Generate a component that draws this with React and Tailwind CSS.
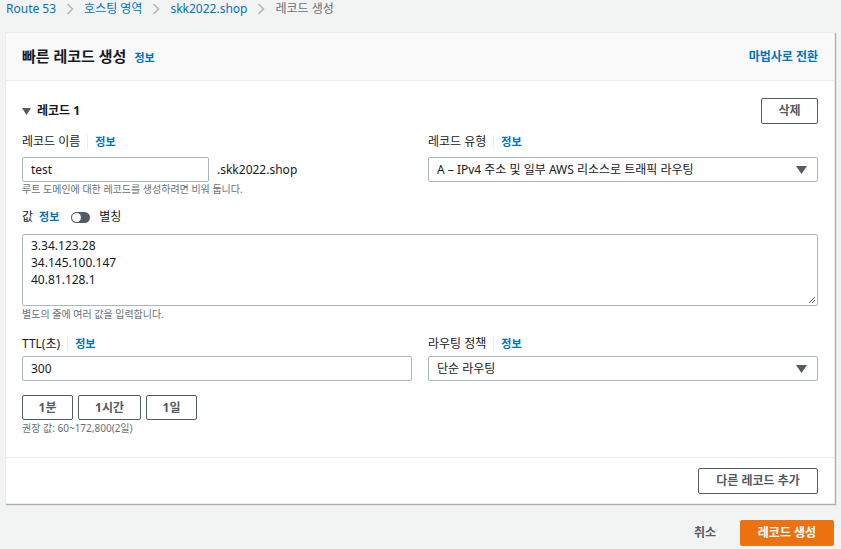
import React from 'react';

const font = { fontFamily: '"Noto Sans", "Noto Sans CJK KR", sans-serif' };

function Info() {
  return <span className="text-[11px] font-bold text-[#0073bb]">정보</span>;
}

function Label({ text }) {
  return (
    <div className="flex items-center h-[16px] text-[12px] text-[#16191f]">
      <span>{text}</span>
      <span className="mx-[7px] h-[14px] w-px bg-[#eaeded]" />
      <Info />
    </div>
  );
}

function Caret() {
  return (
    <svg width="11" height="8" viewBox="0 0 11 8" className="shrink-0">
      <path d="M0 0 L11 0 L5.5 8 Z" fill="#545b64" />
    </svg>
  );
}

function Chevron() {
  return (
    <svg width="8" height="12" viewBox="0 0 8 12" className="mx-[10px] shrink-0">
      <path d="M1.5 1 L6.5 6 L1.5 11" fill="none" stroke="#aab7b8" strokeWidth="1.5" />
    </svg>
  );
}

function Select({ value }) {
  return (
    <div className="flex items-center justify-between h-[25px] border border-[#aab7b8] rounded-[2px] bg-white pl-[8px] pr-[10px] text-[12px] text-[#16191f]">
      <span>{value}</span>
      <Caret />
    </div>
  );
}

function OutlineButton({ label, className }) {
  return (
    <button className={'h-[25px] border border-[#545b64] rounded-[2px] bg-white text-[12px] font-bold text-[#545b64] ' + className}>
      {label}
    </button>
  );
}

export default function App() {
  return (
    <div style={font} className="w-[841px] h-[549px] bg-[#f2f3f3] overflow-hidden">
      <div className="flex items-center h-[32px] pl-[6px] pb-[14px] text-[12px]">
        <span className="text-[#0073bb]">Route 53</span>
        <Chevron />
        <span className="text-[#0073bb]">호스팅 영역</span>
        <Chevron />
        <span className="text-[#0073bb]">skk2022.shop</span>
        <Chevron />
        <span className="text-[#687078]">레코드 생성</span>
      </div>

      <div className="ml-[5px] w-[830px] h-[472px] bg-white border border-[#eaeded] shadow-[1px_1px_1px_0_rgba(0,28,36,0.3)] flex flex-col">
        <div className="flex items-center justify-between h-[48px] bg-[#fafafa] border-b border-[#eaeded] px-[16px]">
          <div className="flex items-baseline gap-[8px]">
            <span className="text-[15px] font-bold text-[#16191f]">빠른 레코드 생성</span>
            <Info />
          </div>
          <span className="text-[12px] font-bold text-[#0073bb]">마법사로 전환</span>
        </div>

        <div className="px-[16px] pt-[17px] flex-1">
          <div className="flex items-center justify-between">
            <div className="flex items-center gap-[6px] text-[12px] font-bold text-[#16191f]">
              <svg width="9" height="7" viewBox="0 0 9 7"><path d="M0 0 L9 0 L4.5 7 Z" fill="#545b64" /></svg>
              <span>레코드 1</span>
            </div>
            <OutlineButton label="삭제" className="w-[57px] h-[26px]" />
          </div>

          <div className="grid grid-cols-2 gap-x-[16px] mt-[10px]">
            <div>
              <Label text="레코드 이름" />
              <div className="flex items-center mt-[7px]">
                <div className="w-[187px] h-[25px] border border-[#aab7b8] rounded-[2px] pl-[8px] flex items-center text-[12px] text-[#16191f]">test</div>
                <span className="ml-[8px] text-[12px] text-[#16191f]">.skk2022.shop</span>
              </div>
              <div className="text-[10px] leading-[14px] text-[#687078]">루트 도메인에 대한 레코드를 생성하려면 비워 둡니다.</div>
            </div>
            <div>
              <Label text="레코드 유형" />
              <div className="mt-[7px]">
                <Select value="A – IPv4 주소 및 일부 AWS 리소스로 트래픽 라우팅" />
              </div>
            </div>
          </div>

          <div className="flex items-center mt-[13px] h-[16px] text-[12px] text-[#16191f]">
            <span>값</span>
            <span className="ml-[6px]"><Info /></span>
            <span className="ml-[12px] relative w-[19px] h-[11px] rounded-full bg-[#545b64]">
              <span className="absolute left-[1px] top-[1px] w-[9px] h-[9px] rounded-full bg-white" />
            </span>
            <span className="ml-[9px]">별칭</span>
          </div>

          <div className="relative mt-[9px] h-[72px] border border-[#aab7b8] rounded-[2px] pl-[8px] pt-[2px] text-[12px] leading-[17px] text-[#16191f]">
            <div>3.34.123.28</div>
            <div>34.145.100.147</div>
            <div>40.81.128.1</div>
            <svg className="absolute right-[1px] bottom-[1px]" width="9" height="9" viewBox="0 0 9 9">
              <path d="M8 2 L2 8 M8 5 L5 8" stroke="#545b64" strokeWidth="1" />
            </svg>
          </div>
          <div className="text-[10px] text-[#687078] mt-[1px]">별도의 줄에 여러 값을 입력합니다.</div>

          <div className="grid grid-cols-2 gap-x-[16px] mt-[14px]">
            <div>
              <Label text="TTL(초)" />
              <div className="mt-[4px] h-[25px] border border-[#aab7b8] rounded-[2px] pl-[8px] flex items-center text-[12px] text-[#16191f]">300</div>
            </div>
            <div>
              <Label text="라우팅 정책" />
              <div className="mt-[4px]">
                <Select value="단순 라우팅" />
              </div>
            </div>
          </div>

          <div className="flex gap-[5px] mt-[14px]">
            <OutlineButton label="1분" className="w-[51px]" />
            <OutlineButton label="1시간" className="w-[63px]" />
            <OutlineButton label="1일" className="w-[51px]" />
          </div>
          <div className="text-[10px] text-[#687078] mt-[1px]">권장 값: 60~172,800(2일)</div>
        </div>

        <div className="h-[46px] border-t border-[#eaeded] flex items-center justify-end px-[16px]">
          <OutlineButton label="다른 레코드 추가" className="w-[120px] h-[26px]" />
        </div>
      </div>

      <div className="flex items-center justify-end mt-[16px] pr-[7px] gap-[24px]">
        <span className="text-[12px] font-bold text-[#545b64]">취소</span>
        <button className="w-[94px] h-[26px] bg-[#ec7211] rounded-[2px] text-[12px] font-bold text-white">레코드 생성</button>
      </div>
    </div>
  );
}
